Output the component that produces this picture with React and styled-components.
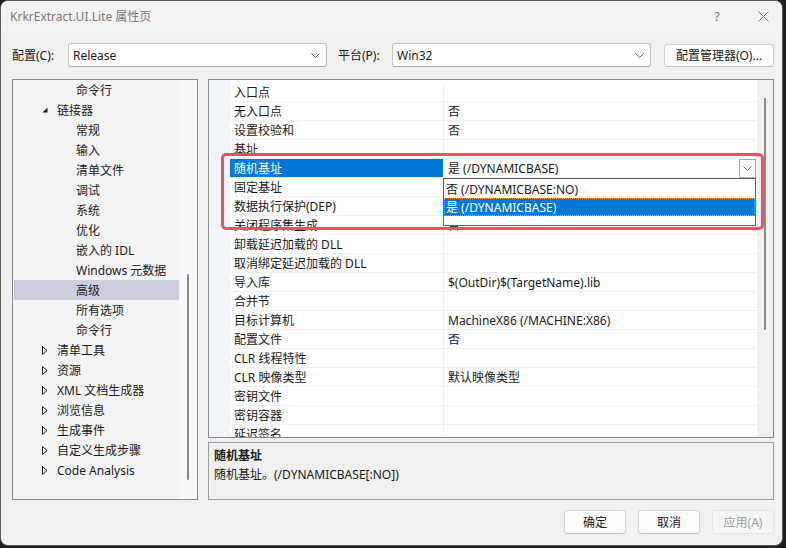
import React from 'react'
import styled, { createGlobalStyle } from 'styled-components'

const Global = createGlobalStyle`
    html, body {
        margin: 0;
        padding: 0;
        background: #1e1e1e;
    }
    * { box-sizing: border-box; }
`;

const FONT = `"Segoe UI", "Noto Sans", "Noto Sans CJK SC", sans-serif`;

const Window = styled.div`
    width: 783px;
    height: 546px;
    background: #f0f0f0;
    border: 1px solid #5c5c5c;
    border-radius: 8px;
    overflow: hidden;
    display: flex;
    flex-direction: column;
    font-family: ${FONT};
    font-size: 12px;
    color: #1a1a1a;
`;

const TitleBar = styled.div`
    height: 30px;
    flex: none;
    display: flex;
    align-items: center;
    background: #f3f3f3;
    padding-left: 9px;
`;
const TitleText = styled.div`
    flex: 1;
    color: #7a7a7a;
    line-height: 16px;
    padding-top: 1px;
`;
const TitleButton = styled.div`
    width: ${p => p.$w}px;
    height: 30px;
    margin-right: ${p => p.$mr || 0}px;
    display: flex;
    align-items: center;
    justify-content: center;
    color: #7a7a7a;
    font-size: 13px;
`;

const Content = styled.div`
    flex: 1;
    display: flex;
    flex-direction: column;
    padding: 12px 8px 11px 11px;
`;

const TopRow = styled.div`
    display: flex;
    align-items: center;
    height: 24px;
`;
const Label = styled.div`
    width: ${p => p.$w}px;
    line-height: 16px;
    padding-top: 2px;
`;
const Combo = styled.div`
    width: 259px;
    height: 24px;
    background: #ffffff;
    border: 1px solid #c4c4c4;
    border-bottom-color: #a8a8a8;
    border-radius: 3px;
    display: flex;
    align-items: center;
    padding: 0 6px 0 4px;
    margin-right: ${p => p.$mr || 0}px;
`;
const ComboText = styled.div`
    flex: 1;
    line-height: 16px;
    padding-top: 2px;
`;
const Button = styled.div`
    width: ${p => p.$w}px;
    height: ${p => p.$h || 24}px;
    display: flex;
    align-items: center;
    justify-content: center;
    background: ${p => p.$disabled ? '#f5f5f5' : '#fdfdfd'};
    border: 1px solid ${p => p.$disabled ? '#e3e3e3' : '#d2d2d2'};
    border-bottom-color: ${p => p.$disabled ? '#e3e3e3' : '#bdbdbd'};
    border-radius: 4px;
    color: ${p => p.$disabled ? '#a0a0a0' : '#1a1a1a'};
    line-height: 16px;
    padding-top: 1px;
`;

const Main = styled.div`
    display: flex;
    gap: 10px;
    margin-top: 12px;
    height: 421px;
`;

const Tree = styled.div`
    width: 186px;
    border: 1px solid #868a91;
    background: #f4f4f4;
    display: flex;
`;
const TreeList = styled.div`
    flex: 1;
    display: flex;
    flex-direction: column;
    padding: 0 1px;
`;
const TreeRow = styled.div`
    height: 20px;
    display: flex;
    align-items: center;
    padding-left: ${p => p.$level === 0 ? 28 : 62}px;
    background: ${p => p.$selected ? '#cccedb' : 'transparent'};
    white-space: nowrap;
`;
const Arrow = styled.div`
    width: 15px;
    height: 20px;
    display: flex;
    align-items: center;
`;
const TreeText = styled.span`
    line-height: 16px;
    padding-top: 2px;
`;
const VScroll = styled.div`
    width: ${p => p.$w}px;
    flex: none;
    background: ${p => p.$bg};
    display: flex;
    flex-direction: column;
    align-items: center;
    padding-top: ${p => p.$top}px;
`;
const Thumb = styled.div`
    width: 2px;
    height: ${p => p.$h}px;
    margin-left: ${p => p.$off || 0}px;
    background: #8a8a8a;
    border-radius: 1px;
`;

const RightCol = styled.div`
    flex: 1;
    display: flex;
    flex-direction: column;
    gap: 4px;
`;

const Grid = styled.div`
    position: relative;
    height: 359px;
    border: 1px solid #868a91;
    background: #ffffff;
    display: flex;
`;
const Gutter = styled.div`
    width: 21px;
    flex: none;
    background: #f4f5f8;
`;
const Rows = styled.div`
    flex: 1;
    overflow: hidden;
    padding-top: 3px;
`;
const PropRow = styled.div`
    height: 19px;
    display: flex;
    border-bottom: 1px solid #eef0f4;
`;
const NameCell = styled.div`
    width: 214px;
    flex: none;
    padding-left: 4px;
    display: flex;
    align-items: center;
    white-space: nowrap;
    overflow: hidden;
    background: ${p => p.$selected ? '#0078d7' : 'transparent'};
    color: ${p => p.$selected ? '#ffffff' : '#1a1a1a'};
    border-right: 1px solid #eef0f4;
`;
const ValueCell = styled.div`
    flex: 1;
    padding-left: 4px;
    display: flex;
    align-items: center;
    white-space: nowrap;
`;
const CellText = styled.span`
    flex: 1;
    line-height: 16px;
    padding-top: 2px;
`;
const DropButton = styled.div`
    width: 17px;
    height: 19px;
    margin-right: 1px;
    border: 1px solid #a9a9a9;
    background: #ffffff;
    display: flex;
    align-items: center;
    justify-content: center;
    align-self: flex-start;
`;

const DropList = styled.div`
    position: absolute;
    left: 234px;
    top: 98px;
    width: 313px;
    height: 48px;
    background: #ffffff;
    border: 1px solid #646464;
    padding-top: 2px;
    z-index: 2;
`;
const DropItem = styled.div`
    height: ${p => p.$h}px;
    display: flex;
    align-items: center;
    padding: 1px 0 0 2px;
    background: ${p => p.$active ? '#0078d7' : '#ffffff'};
    color: ${p => p.$active ? '#ffffff' : '#1a1a1a'};
    outline: ${p => p.$active ? '1px dotted #f0a030' : 'none'};
    outline-offset: -1px;
    line-height: 16px;
`;

const Annotation = styled.div`
    position: absolute;
    left: 12px;
    top: 73px;
    width: 543px;
    height: 77px;
    border: 3px solid #f24f66;
    border-radius: 5px;
    z-index: 3;
    pointer-events: none;
`;

const Desc = styled.div`
    flex: 1;
    border: 1px solid #a0a0a0;
    padding: 3px 5px;
    display: flex;
    flex-direction: column;
`;
const DescTitle = styled.div`
    font-weight: bold;
    line-height: 19px;
`;
const DescText = styled.div`
    line-height: 19px;
`;

const Footer = styled.div`
    display: flex;
    justify-content: flex-end;
    margin-top: 10px;
    gap: 12px;
`;

const Chevron = ({ color = '#606060' }) => (
    <svg width="9" height="5" viewBox="0 0 9 5">
        <path d="M0.5 0.5 L4.5 4.5 L8.5 0.5" fill="none" stroke={color} strokeWidth="1" />
    </svg>
)

const Expanded = () => (
    <svg width="6" height="6" viewBox="0 0 6 6">
        <path d="M5.5 0.5 L5.5 5.5 L0.5 5.5 Z" fill="#1e1e1e" />
    </svg>
)

const Collapsed = () => (
    <svg width="6" height="9" viewBox="0 0 6 9">
        <path d="M0.5 0.5 L5 4.5 L0.5 8.5 Z" fill="none" stroke="#1e1e1e" strokeWidth="1" />
    </svg>
)

const CloseIcon = () => (
    <svg width="11" height="11" viewBox="0 0 11 11">
        <path d="M0.5 0.5 L10.5 10.5 M10.5 0.5 L0.5 10.5" stroke="#7a7a7a" strokeWidth="1" />
    </svg>
)

const treeItems = [
    { text: '命令行', level: 1 },
    { text: '链接器', level: 0, open: true },
    { text: '常规', level: 1 },
    { text: '输入', level: 1 },
    { text: '清单文件', level: 1 },
    { text: '调试', level: 1 },
    { text: '系统', level: 1 },
    { text: '优化', level: 1 },
    { text: '嵌入的 IDL', level: 1 },
    { text: 'Windows 元数据', level: 1 },
    { text: '高级', level: 1, selected: true },
    { text: '所有选项', level: 1 },
    { text: '命令行', level: 1 },
    { text: '清单工具', level: 0 },
    { text: '资源', level: 0 },
    { text: 'XML 文档生成器', level: 0 },
    { text: '浏览信息', level: 0 },
    { text: '生成事件', level: 0 },
    { text: '自定义生成步骤', level: 0 },
    { text: 'Code Analysis', level: 0 },
]

const props = [
    ['入口点', ''],
    ['无入口点', '否'],
    ['设置校验和', '否'],
    ['基址', ''],
    ['随机基址', '是 (/DYNAMICBASE)', true],
    ['固定基址', ''],
    ['数据执行保护(DEP)', ''],
    ['关闭程序集生成', '否'],
    ['卸载延迟加载的 DLL', ''],
    ['取消绑定延迟加载的 DLL', ''],
    ['导入库', '$(OutDir)$(TargetName).lib'],
    ['合并节', ''],
    ['目标计算机', 'MachineX86 (/MACHINE:X86)'],
    ['配置文件', '否'],
    ['CLR 线程特性', ''],
    ['CLR 映像类型', '默认映像类型'],
    ['密钥文件', ''],
    ['密钥容器', ''],
    ['延迟签名', ''],
]

function App() {

    const renderTree = treeItems.map((item, index) => (
        <TreeRow key={index} $level={item.level} $selected={item.selected}>
            {item.level === 0 &&
                <Arrow>{item.open ? <Expanded /> : <Collapsed />}</Arrow>}
            <TreeText>{item.text}</TreeText>
        </TreeRow>
    ))

    const renderProps = props.map(([name, value, selected], index) => (
        <PropRow key={index}>
            <NameCell $selected={selected}><CellText>{name}</CellText></NameCell>
            <ValueCell>
                <CellText>{value}</CellText>
                {selected && <DropButton><Chevron /></DropButton>}
            </ValueCell>
        </PropRow>
    ))

    return (
        <>
            <Global />
            <Window>
                <TitleBar>
                    <TitleText>KrkrExtract.UI.Lite 属性页</TitleText>
                    <TitleButton $w={46} $mr={4}>?</TitleButton>
                    <TitleButton $w={38}><CloseIcon /></TitleButton>
                </TitleBar>
                <Content>
                    <TopRow>
                        <Label $w={56}>配置(C):</Label>
                        <Combo $mr={11}>
                            <ComboText>Release</ComboText>
                            <Chevron />
                        </Combo>
                        <Label $w={54}>平台(P):</Label>
                        <Combo $mr={13}>
                            <ComboText>Win32</ComboText>
                            <Chevron />
                        </Combo>
                        <Button $w={110} $h={23}>配置管理器(O)...</Button>
                    </TopRow>

                    <Main>
                        <Tree>
                            <TreeList>{renderTree}</TreeList>
                            <VScroll $w={17} $bg="#f9f9f9" $top={194}>
                                <Thumb $h={206} $off={-2} />
                            </VScroll>
                        </Tree>

                        <RightCol>
                            <Grid>
                                <Gutter />
                                <Rows>{renderProps}</Rows>
                                <VScroll $w={16} $bg="#f0f0f0" $top={18}>
                                    <Thumb $h={232} />
                                </VScroll>
                                <DropList>
                                    <DropItem $h={17}>否 (/DYNAMICBASE:NO)</DropItem>
                                    <DropItem $h={18} $active>是 (/DYNAMICBASE)</DropItem>
                                </DropList>
                                <Annotation />
                            </Grid>
                            <Desc>
                                <DescTitle>随机基址</DescTitle>
                                <DescText>随机基址。(/DYNAMICBASE[:NO])</DescText>
                            </Desc>
                        </RightCol>
                    </Main>

                    <Footer>
                        <Button $w={62}>确定</Button>
                        <Button $w={62}>取消</Button>
                        <Button $w={62} $disabled>应用(A)</Button>
                    </Footer>
                </Content>
            </Window>
        </>
    )
}

export default App
